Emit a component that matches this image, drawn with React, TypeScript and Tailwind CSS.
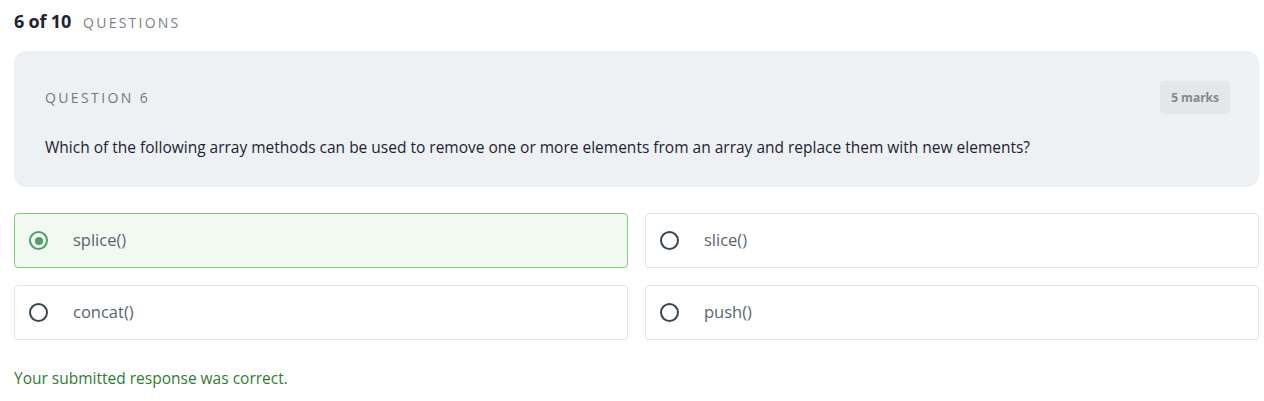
import React from 'react';

// ─── Data ─────────────────────────────────────────────────────────────────────

interface Option {
  id: string;
  label: string;
}

const OPTIONS: Option[] = [
  { id: 'a', label: 'splice()' },
  { id: 'b', label: 'slice()' },
  { id: 'c', label: 'concat()' },
  { id: 'd', label: 'push()' },
];

const SELECTED = 'a';

// ─── Radio ────────────────────────────────────────────────────────────────────

function Radio({ checked }: { checked: boolean }) {
  return (
    <span
      className={`flex h-[19px] w-[19px] shrink-0 items-center justify-center rounded-full border-[2.5px] ${
        checked ? 'border-[#4f9f66]' : 'border-[#37474f]'
      }`}
    >
      {checked && <span className="h-[8px] w-[8px] rounded-full bg-[#4f9f66]" />}
    </span>
  );
}

// ─── App ──────────────────────────────────────────────────────────────────────

export default function App() {
  return (
    <div className="min-h-[401px] w-[1259px] bg-white pl-[14px] pt-[8px] font-['Open_Sans','Noto_Sans',sans-serif]">
      {/* Progress */}
      <div className="flex h-[24px] items-baseline gap-[12px]">
        <span className="text-[18px] font-bold tracking-[-0.01em] text-[#1c2430]">6 of 10</span>
        <span className="text-[14px] tracking-[0.16em] text-[#7b8088]">QUESTIONS</span>
      </div>

      {/* Question card */}
      <div className="mt-[19px] rounded-[12px] bg-[#eef1f4] pl-[31px] pr-[29px] pt-[30px] pb-[29px]">
        <div className="flex items-center justify-between">
          <span className="text-[14px] tracking-[0.17em] text-[#74787e]">QUESTION 6</span>
          <span className="rounded-[4px] bg-[#e4e6e8] px-[11px] py-[8px] text-[12px] font-bold leading-[17px] text-[#85888c]">
            5 marks
          </span>
        </div>
        <p className="mt-[22px] text-[15.5px] leading-[22px] text-[#1d2330]">
          Which of the following array methods can be used to remove one or more elements from an array and replace them with new elements?
        </p>
      </div>

      {/* Options */}
      <div className="mt-[26px] grid grid-cols-2 gap-x-[17px] gap-y-[17px]">
        {OPTIONS.map((opt) => {
          const checked = opt.id === SELECTED;
          return (
            <div
              key={opt.id}
              className={`flex h-[55px] items-center gap-[25px] rounded-[4px] border px-[14px] ${
                checked ? 'border-[#7dcf7a] bg-[#f2f9f1]' : 'border-[#e3e5e7] bg-white'
              }`}
            >
              <Radio checked={checked} />
              <span className="text-[16.5px] text-[#5a6470]">{opt.label}</span>
            </div>
          );
        })}
      </div>

      {/* Result */}
      <p className="mt-[27px] text-[15.5px] text-[#2e7d32]">Your submitted response was correct.</p>
    </div>
  );
}
